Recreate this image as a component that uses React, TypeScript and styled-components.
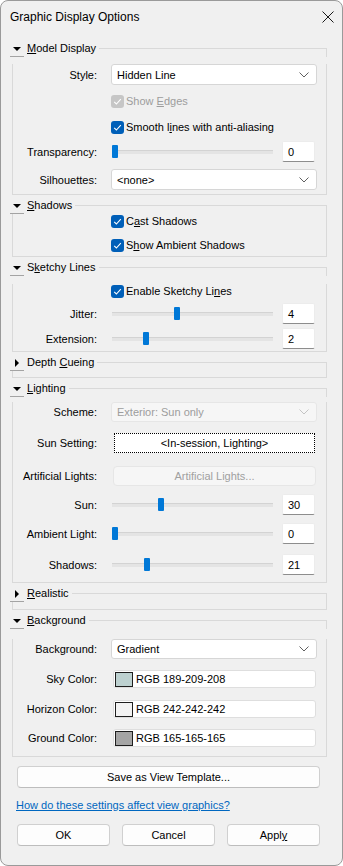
import React from 'react';
import styled, { createGlobalStyle } from 'styled-components';

const GlobalStyle = createGlobalStyle`
  html, body {
    margin: 0;
    padding: 0;
    background: #ffffff;
  }
  body {
    font-family: 'Liberation Sans', Arial, sans-serif;
    font-size: 11px;
    color: #000;
  }
  * {
    box-sizing: border-box;
  }
`;

const Dialog = styled.div`
  width: 343px;
  height: 866px;
  background: #f0f0f0;
  border: 1px solid #9a9a9a;
  border-radius: 8px;
  overflow: hidden;
  display: flex;
  flex-direction: column;
`;

const TitleBar = styled.div`
  height: 31px;
  display: flex;
  align-items: center;
  justify-content: space-between;
  padding: 0 8px 0 9px;
  font-size: 12px;
`;

const Content = styled.div`
  padding: 8px 15px 0 11px;
  display: flex;
  flex-direction: column;
`;

const Group = styled.div<{ $mt: number }>`
  margin-top: ${(p) => p.$mt}px;
`;

const GroupHeader = styled.div`
  display: flex;
  height: 17px;
`;

const ArrowButton = styled.div`
  width: 14px;
  height: 17px;
  margin-left: -2px;
  display: flex;
  align-items: center;
  justify-content: center;
  border-bottom: 1px solid #a3a3a3;
  padding-top: 1px;
`;

const GroupTitle = styled.span`
  margin-left: 3px;
  padding-right: 3px;
  line-height: 17px;
`;

const HeaderLine = styled.div`
  flex: 1;
  align-self: flex-end;
  height: 9px;
  border-top: 1px solid #d9d9d9;
  border-right: 1px solid #d9d9d9;
`;

const GroupBody = styled.div<{ $pb: number }>`
  border: 1px solid #d9d9d9;
  border-top: none;
  padding-bottom: ${(p) => p.$pb}px;
`;

const Row = styled.div<{ $mt: number; $h?: number }>`
  display: grid;
  grid-template-columns: 84px 1fr;
  column-gap: 14px;
  align-items: center;
  height: ${(p) => p.$h ?? 21}px;
  margin: ${(p) => p.$mt}px 9px 0 0;
`;

const Label = styled.span`
  text-align: right;
  white-space: nowrap;
`;

const SelectBox = styled.div<{ $disabled?: boolean }>`
  height: 100%;
  display: flex;
  align-items: center;
  justify-content: space-between;
  padding: 0 7px 0 5px;
  background: ${(p) => (p.$disabled ? '#f6f6f6' : '#ffffff')};
  color: ${(p) => (p.$disabled ? '#9d9d9d' : '#000')};
  border: 1px solid ${(p) => (p.$disabled ? '#e6e6e6' : '#d6d6d6')};
  border-radius: 3px;
`;

const CheckLine = styled.label<{ $disabled?: boolean }>`
  display: flex;
  align-items: center;
  gap: 2px;
  color: ${(p) => (p.$disabled ? '#9d9d9d' : '#000')};
  white-space: nowrap;
`;

const CheckBox = styled.span<{ $disabled?: boolean }>`
  width: 13px;
  height: 13px;
  border-radius: 3px;
  background: ${(p) => (p.$disabled ? '#c6c6c6' : '#005fb8')};
  display: flex;
  align-items: center;
  justify-content: center;
`;

const SliderWrap = styled.div`
  display: flex;
  align-items: center;
  gap: 9px;
  margin: 0 2px 0 1px;
  height: 100%;
`;

const Track = styled.div`
  position: relative;
  flex: 1;
  height: 4px;
  background: #e4e4e4;
  border-top: 1px solid #d3d3d3;
`;

const Thumb = styled.div`
  position: absolute;
  top: 50%;
  width: 6px;
  height: 13px;
  margin-top: -7px;
  background: #0078d7;
  border-radius: 1px;
`;

const NumberBox = styled.div`
  width: 33px;
  height: 21px;
  background: #ffffff;
  border: 1px solid #ececec;
  border-bottom-color: #8d8d8d;
  border-radius: 2px;
  padding-left: 5px;
  display: flex;
  align-items: center;
`;

const FocusButton = styled.div`
  height: 100%;
  margin: 0 2px 0 3px;
  background: #ffffff;
  border: 1px dotted #000;
  display: flex;
  align-items: center;
  justify-content: center;
`;

const DisabledButton = styled.div`
  height: 100%;
  margin: 0 1px 0 2px;
  background: #f6f6f6;
  border: 1px solid #e6e6e6;
  border-radius: 4px;
  color: #a0a0a0;
  display: flex;
  align-items: center;
  justify-content: center;
`;

const ColorField = styled.div`
  height: 100%;
  margin: 0 1px 0 2px;
  background: #ffffff;
  border: 1px solid #dedede;
  border-radius: 3px;
  display: flex;
  align-items: center;
  gap: 3px;
  padding-left: 1px;
`;

const Swatch = styled.span<{ $color: string }>`
  width: 18px;
  height: 15px;
  background: ${(p) => p.$color};
  border: 1px solid #1e1e1e;
`;

const Footer = styled.div`
  margin: 9px 7px 0 5px;
  display: flex;
  flex-direction: column;
`;

const PushButton = styled.div`
  height: 22px;
  background: #fdfdfd;
  border: 1px solid #d0d0d0;
  border-bottom-color: #bdbdbd;
  border-radius: 4px;
  display: flex;
  align-items: center;
  justify-content: center;
`;

const HelpLink = styled.a`
  margin: 10px 0 0 -1px;
  line-height: 14px;
  color: #0067c0;
  text-decoration: underline;
  cursor: pointer;
`;

const ButtonRow = styled.div`
  margin-top: 12px;
  display: grid;
  grid-template-columns: repeat(3, 1fr);
  column-gap: 12px;
`;

const Chevron = ({ color = '#606060' }: { color?: string }) => (
  <svg width="10" height="6" viewBox="0 0 10 6">
    <path d="M0.5 0.5 L5 5 L9.5 0.5" fill="none" stroke={color} strokeWidth="1" />
  </svg>
);

const Arrow = ({ open }: { open: boolean }) =>
  open ? (
    <svg width="8" height="4" viewBox="0 0 8 4">
      <path d="M0 0 H8 L4 4 Z" fill="#000" />
    </svg>
  ) : (
    <svg width="4" height="8" viewBox="0 0 4 8">
      <path d="M0 0 V8 L4 4 Z" fill="#000" />
    </svg>
  );

const Check = () => (
  <svg width="11" height="11" viewBox="0 0 11 11">
    <path d="M2.2 5.8 L4.4 8 L8.8 3.2" fill="none" stroke="#fff" strokeWidth="1.1" />
  </svg>
);

interface SectionProps {
  title: React.ReactNode;
  open: boolean;
  mt: number;
  pb: number;
  children?: React.ReactNode;
}

const Section: React.FC<SectionProps> = ({ title, open, mt, pb, children }) => (
  <Group $mt={mt}>
    <GroupHeader>
      <ArrowButton>
        <Arrow open={open} />
      </ArrowButton>
      <GroupTitle>{title}</GroupTitle>
      <HeaderLine />
    </GroupHeader>
    <GroupBody $pb={pb}>{children}</GroupBody>
  </Group>
);

const Checked: React.FC<{ disabled?: boolean; children: React.ReactNode }> = ({ disabled, children }) => (
  <CheckLine $disabled={disabled}>
    <CheckBox $disabled={disabled}>
      <Check />
    </CheckBox>
    <span>{children}</span>
  </CheckLine>
);

const Slider: React.FC<{ value: number; max: number }> = ({ value, max }) => (
  <SliderWrap>
    <Track>
      <Thumb style={{ left: `${(value / max) * 154}px` }} />
    </Track>
    <NumberBox>{value}</NumberBox>
  </SliderWrap>
);

const Select: React.FC<{ value: string; disabled?: boolean }> = ({ value, disabled }) => (
  <SelectBox $disabled={disabled}>
    <span>{value}</span>
    <Chevron color={disabled ? '#c4c4c4' : '#606060'} />
  </SelectBox>
);

const ColorRow: React.FC<{ label: string; rgb: [number, number, number]; mt: number }> = ({ label, rgb, mt }) => (
  <Row $mt={mt} $h={18}>
    <Label>{label}</Label>
    <ColorField>
      <Swatch $color={`rgb(${rgb.join(',')})`} />
      <span>RGB {rgb.join('-')}</span>
    </ColorField>
  </Row>
);

export default function App() {
  return (
    <>
      <GlobalStyle />
      <Dialog>
        <TitleBar>
          <span>Graphic Display Options</span>
          <svg width="12" height="12" viewBox="0 0 12 12">
            <path d="M0.5 0.5 L11.5 11.5 M11.5 0.5 L0.5 11.5" stroke="#1a1a1a" strokeWidth="1" />
          </svg>
        </TitleBar>
        <Content>
          <Section title={<><u>M</u>odel Display</>} open mt={0} pb={4}>
            <Row $mt={7}>
              <Label>Style:</Label>
              <Select value="Hidden Line" />
            </Row>
            <Row $mt={9} $h={14}>
              <span />
              <Checked disabled>
                Show <u>E</u>dges
              </Checked>
            </Row>
            <Row $mt={12} $h={14}>
              <span />
              <Checked>
                Smooth l<u>i</u>nes with anti-aliasing
              </Checked>
            </Row>
            <Row $mt={7}>
              <Label>Transparency:</Label>
              <Slider value={0} max={100} />
            </Row>
            <Row $mt={7}>
              <Label>Silhouettes:</Label>
              <Select value="<none>" />
            </Row>
          </Section>

          <Section title={<><u>S</u>hadows</>} open mt={2} pb={4}>
            <Row $mt={0} $h={14}>
              <span />
              <Checked>
                C<u>a</u>st Shadows
              </Checked>
            </Row>
            <Row $mt={10} $h={14}>
              <span />
              <Checked>
                S<u>h</u>ow Ambient Shadows
              </Checked>
            </Row>
          </Section>

          <Section title={<>S<u>k</u>etchy Lines</>} open mt={2} pb={2}>
            <Row $mt={8} $h={14}>
              <span />
              <Checked>
                Enable Sketchy Li<u>n</u>es
              </Checked>
            </Row>
            <Row $mt={5}>
              <Label>Jitter:</Label>
              <Slider value={4} max={10} />
            </Row>
            <Row $mt={4}>
              <Label>Extension:</Label>
              <Slider value={2} max={10} />
            </Row>
          </Section>

          <Section title={<>Depth <u>C</u>ueing</>} open={false} mt={2} pb={6} />

          <Section title={<><u>L</u>ighting</>} open mt={2} pb={7}>
            <Row $mt={5} $h={20}>
              <Label>Scheme:</Label>
              <Select value="Exterior: Sun only" disabled />
            </Row>
            <Row $mt={11} $h={20}>
              <Label>Sun Setting:</Label>
              <FocusButton>&lt;In-session, Lighting&gt;</FocusButton>
            </Row>
            <Row $mt={13} $h={20}>
              <Label>Artificial Lights:</Label>
              <DisabledButton>Artificial Lights...</DisabledButton>
            </Row>
            <Row $mt={8}>
              <Label>Sun:</Label>
              <Slider value={30} max={100} />
            </Row>
            <Row $mt={8}>
              <Label>Ambient Light:</Label>
              <Slider value={0} max={100} />
            </Row>
            <Row $mt={10}>
              <Label>Shadows:</Label>
              <Slider value={21} max={100} />
            </Row>
          </Section>

          <Section title={<><u>R</u>ealistic</>} open={false} mt={2} pb={7} />

          <Section title={<><u>B</u>ackground</>} open mt={2} pb={9}>
            <Row $mt={10} $h={20}>
              <Label>Background:</Label>
              <Select value="Gradient" />
            </Row>
            <ColorRow label="Sky Color:" rgb={[189, 209, 208]} mt={11} />
            <ColorRow label="Horizon Color:" rgb={[242, 242, 242]} mt={12} />
            <ColorRow label="Ground Color:" rgb={[165, 165, 165]} mt={11} />
          </Section>

          <Footer>
            <PushButton>Save as View Template...</PushButton>
            <HelpLink>How do these settings affect view graphics?</HelpLink>
            <ButtonRow>
              <PushButton>OK</PushButton>
              <PushButton>Cancel</PushButton>
              <PushButton>
                Appl<u>y</u>
              </PushButton>
            </ButtonRow>
          </Footer>
        </Content>
      </Dialog>
    </>
  );
}
